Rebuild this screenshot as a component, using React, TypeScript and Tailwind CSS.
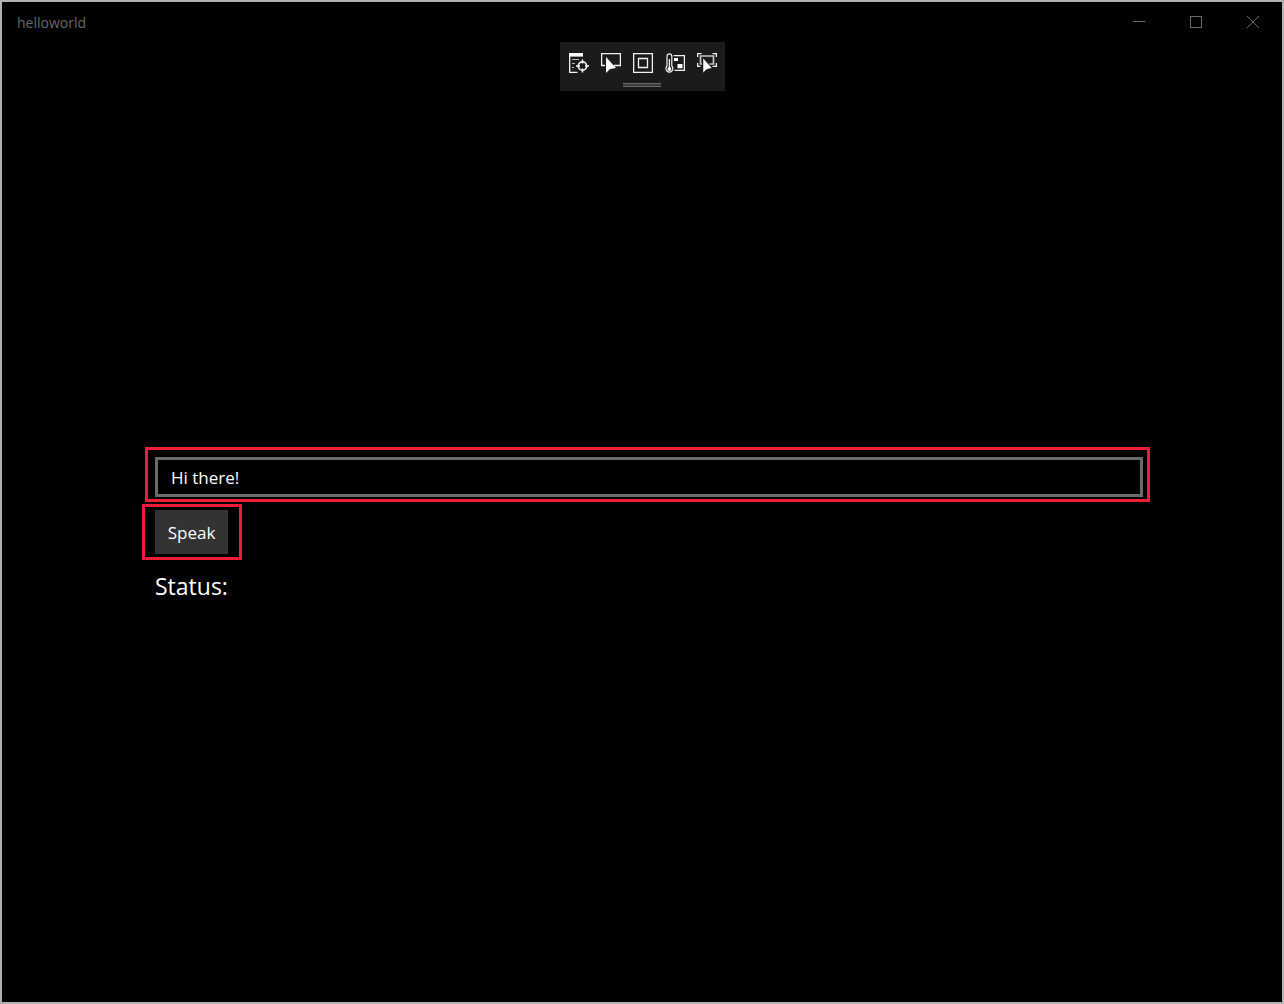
import { useState, type ReactNode } from "react";

function ToolButton({ label, children }: { label: string; children: ReactNode }) {
  return (
    <button type="button" aria-label={label} className="size-5">
      <svg viewBox="0 0 20 20" className="block size-5" fill="none" stroke="#f2f2f2" strokeWidth="1.3">
        {children}
      </svg>
    </button>
  );
}

function DebugToolbar() {
  return (
    <div className="flex flex-col items-center self-center bg-[#1b1b1b] px-2 pt-[11px] pb-1">
      <div className="flex gap-3 pl-px">
        <ToolButton label="Go to live visual tree">
          <path d="M0 0H14V3.6H0Z" fill="#fff" stroke="none" />
          <path d="M.7 3V19.3H8.500" />
          <path d="M3 6.500H10M3 10.500H6M3 14.500H5" stroke="#b5b5b5" strokeWidth="1.2" />
          <circle cx="13.500" cy="13" r="4.200" strokeWidth="1.700" />
          <path d="M13.500 6.500V10.500M13.500 15.500V19.500M7 13H11M16 13H20" strokeWidth="1.500" />
        </ToolButton>
        <ToolButton label="Select element">
          <path d="M4 12.500H.6V.6H19.400V12.500H13" />
          <path d="M5 4V20L9 16L15 15Z" fill="#fff" stroke="none" />
        </ToolButton>
        <ToolButton label="Display layout adorners">
          <path d="M.6 .6H19.400V19.400H.6ZM5.500 5.500H14.500V14.500H5.500Z" />
        </ToolButton>
        <ToolButton label="Hot reload status">
          <path d="M2 13V3.200A2.400 2.400 0 0 1 6.800 3.200V13A3.500 3.500 0 1 1 2 13Z" strokeWidth="1.200" />
          <path d="M4.400 6V15" strokeWidth="1.300" />
          <circle cx="4.400" cy="16" r="1.900" fill="#fff" stroke="none" />
          <path d="M8.500 2.700H19.400V17.400H9.500" />
          <path d="M9 5H13V8H9ZM12.500 11H17.500V15.200H12.500Z" fill="#fff" stroke="none" />
        </ToolButton>
        <ToolButton label="Track focused element">
          <path d="M.6 4V.6H4.500M15.500 .6H19.400V4M.6 10V13.400H3.500M19.400 10V13.400H15.500" />
          <path d="M5 11H3.500V3H16.500V11H12.500" stroke="#c4c4c4" strokeWidth="1.700" />
          <path d="M6 5V20L9.500 16.500L15 15Z" fill="#fff" stroke="#1b1b1b" strokeWidth=".5" />
        </ToolButton>
      </div>
      <div className="mt-[10px] h-1 w-[38px] border-y border-[#666] bg-[#3c3c3c]" />
    </div>
  );
}

export default function App() {
  const [text, setText] = useState("Hi there!");

  return (
    <div className="flex min-h-screen flex-col border-2 border-[#b0b2b2] bg-black font-['Open_Sans','Noto_Sans',sans-serif] text-white">
      <header className="flex h-10 items-center justify-between pr-px pl-[15px] text-[#686868]">
        <h1 className="pt-[2px] text-sm">helloworld</h1>
        <div className="flex">
          <button type="button" aria-label="Minimize" className="flex h-10 w-[57px] items-center justify-center">
            <svg viewBox="0 0 12 12" className="size-3" stroke="currentColor" shapeRendering="crispEdges">
              <path d="M0 5.500H12" />
            </svg>
          </button>
          <button type="button" aria-label="Maximize" className="flex h-10 w-[57px] items-center justify-center">
            <svg viewBox="0 0 12 12" className="size-3" fill="none" stroke="currentColor" shapeRendering="crispEdges">
              <path d="M.5 .5H11.500V11.500H.5Z" />
            </svg>
          </button>
          <button type="button" aria-label="Close" className="flex h-10 w-[57px] items-center justify-center">
            <svg viewBox="0 0 12 12" className="size-3" stroke="currentColor">
              <path d="M0 0L12 12M12 0L0 12" />
            </svg>
          </button>
        </div>
      </header>

      <DebugToolbar />

      <main className="flex flex-1 flex-col items-start justify-center gap-[2px] pr-[132px] pb-11 pl-[140px]">
        <div className="ml-[3px] self-stretch border-3 border-[#ee1c35] pt-[7px] pr-1 pb-[2px] pl-[7px]">
          <input
            type="text"
            aria-label="Text to speak"
            value={text}
            onChange={(e) => setText(e.target.value)}
            className="block h-10 w-full border-3 border-[#6a6a6a] bg-black px-[13px] text-[17px] outline-none"
          />
        </div>
        <div className="border-3 border-[#ee1c35] py-[3px] pr-[11px] pl-[10px]">
          <button type="button" className="block h-11 w-[73px] bg-[#333] pt-[2px] text-center text-[17px]">
            Speak
          </button>
        </div>
        <p className="mt-2 pl-[13px] text-[23px] leading-8">Status:</p>
      </main>
    </div>
  );
}
